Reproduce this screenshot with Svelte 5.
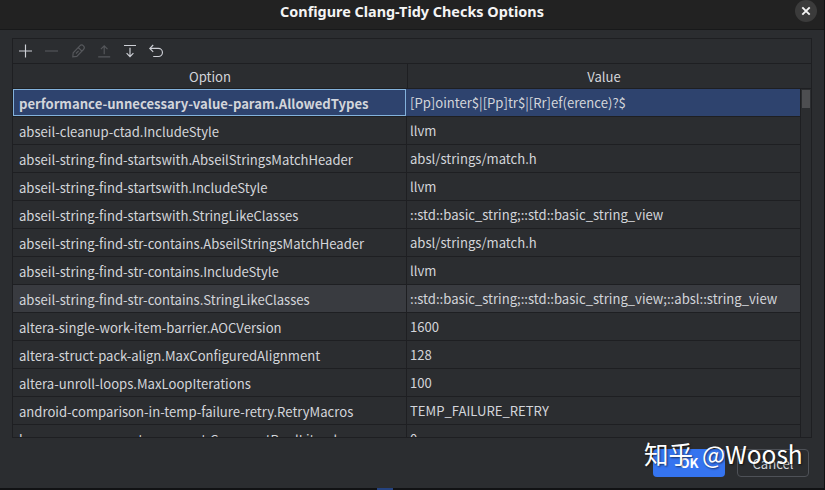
<script>
  const rows = [
    ['performance-unnecessary-value-param.AllowedTypes', '[Pp]ointer$|[Pp]tr$|[Rr]ef(erence)?$'],
    ['abseil-cleanup-ctad.IncludeStyle', 'llvm'],
    ['abseil-string-find-startswith.AbseilStringsMatchHeader', 'absl/strings/match.h'],
    ['abseil-string-find-startswith.IncludeStyle', 'llvm'],
    ['abseil-string-find-startswith.StringLikeClasses', '::std::basic_string;::std::basic_string_view'],
    ['abseil-string-find-str-contains.AbseilStringsMatchHeader', 'absl/strings/match.h'],
    ['abseil-string-find-str-contains.IncludeStyle', 'llvm'],
    ['abseil-string-find-str-contains.StringLikeClasses', '::std::basic_string;::std::basic_string_view;::absl::string_view'],
    ['altera-single-work-item-barrier.AOCVersion', '1600'],
    ['altera-struct-pack-align.MaxConfiguredAlignment', '128'],
    ['altera-unroll-loops.MaxLoopIterations', '100'],
    ['android-comparison-in-temp-failure-retry.RetryMacros', 'TEMP_FAILURE_RETRY'],
    ['bugprone-argument-comment.CommentBoolLiterals', '0']
  ];
  const selected = 0;
  const hovered = 7;
</script>

<div class="window">
  <header class="titlebar">
    <h1>Configure Clang-Tidy Checks Options</h1>
    <button class="close" aria-label="Close">
      <svg width="22" height="22" viewBox="0 0 22 22"><path d="M7.3 7.3l7.4 7.4M14.7 7.3l-7.4 7.4" stroke="#f4f4f4" stroke-width="1.9" /></svg>
    </button>
  </header>

  <main>
    <section class="panel">
      <div class="toolbar">
        <svg viewBox="0 0 16 16"><path d="M8.5 1.5v13M2 8h13" /></svg>
        <svg viewBox="0 0 16 16" class="off"><path d="M2 8h13" /></svg>
        <svg viewBox="0 0 16 16" class="off pencil"><path d="M2.8 13.8l.4-4 6.6-6.9a2.5 2.5 0 0 1 3.7 3.6L6.8 13.4zM8.4 4.6l3.4 3.4M6 10.5l2.6-2.7" /></svg>
        <svg viewBox="0 0 16 16" class="off"><path d="M2.2 13.8h12M8.2 11.2V3M4.9 6.2L8.2 2.9l3.3 3.3" /></svg>
        <svg viewBox="0 0 16 16"><path d="M2 2.5h12M8 4.8V13.5M4.6 10.2L8 13.6l3.4-3.4" /></svg>
        <svg viewBox="0 0 16 16"><path d="M5.2 2L1.8 5.4l3.4 3.4M1.8 5.4h8.6a4.05 4.05 0 0 1 0 8.1H5.2" /></svg>
      </div>
      <div class="heads">
        <div class="option">Option</div>
        <div class="value">Value</div>
      </div>
      <div class="body">
        <div class="rows">
          {#each rows as [option, value], i}
            <div class="row" class:selected={i === selected} class:hovered={i === hovered}>
              <div class="option"><span>{option}</span></div>
              <div class="value"><span>{value}</span></div>
            </div>
          {/each}
        </div>
        <div class="track"><div class="thumb"></div></div>
      </div>
    </section>
    <footer>
      <button class="btn ok">OK</button>
      <button class="btn cancel">Cancel</button>
    </footer>
  </main>
  <div class="below"><i></i></div>
  <div class="watermark">知乎 <span>@Woosh</span></div>
</div>

<style>
  :global(body) { background: #2b2d30; }
  .window {
    position: relative;
    box-sizing: border-box;
    width: 825px;
    height: 490px;
    overflow: hidden;
    display: flex;
    flex-direction: column;
    background: #2b2d30;
    border-right: 1px solid #101113;
    color: #d3d5da;
    font: 13.1px/27px "Noto Sans CJK SC", "Noto Sans", sans-serif;
  }
  button { padding: 0; border: 0; font: inherit; color: inherit; }
  .titlebar {
    flex: none;
    box-sizing: border-box;
    height: 30px;
    display: flex;
    align-items: flex-start;
    background: #222222;
    border-bottom: 1px solid #18191a;
  }
  h1 {
    margin: 0;
    padding-left: 29px;
    flex: 1;
    text-align: center;
    font: bold 14.4px/24px "Noto Sans", "Open Sans", sans-serif;
    color: #f4f4f4;
    white-space: nowrap;
  }
  .close {
    width: 22px;
    height: 22px;
    margin-right: 7px;
    border-radius: 50%;
    background: #3b3b3b;
  }
  .close svg { display: block; }
  main { flex: 1; min-height: 0; padding: 8px 12px 0; }
  .panel {
    box-sizing: border-box;
    width: 800px;
    height: 400px;
    display: flex;
    flex-direction: column;
    border: 1px solid #1e1f22;
  }
  .toolbar {
    flex: none;
    height: 24px;
    display: flex;
    align-items: center;
    gap: 10.2px;
    padding-left: 4px;
    border-bottom: 1px solid #1e1f22;
  }
  .toolbar svg { width: 16px; height: 16px; fill: none; stroke: #ced0d6; stroke-width: 1.15; overflow: visible; }
  .toolbar svg.off { stroke: #55575b; }
  .toolbar svg.pencil { margin-left: 0.6px; margin-right: -0.6px; }
  .heads { flex: none; display: flex; height: 24px; line-height: 25px; text-align: center; border-bottom: 1px solid #1e1f22; }
  .option { box-sizing: border-box; width: 394px; flex: none; border-right: 1px solid #1e1f22; }
  .heads .option { width: 395px; }
  .value { flex: 1; }
  .heads .value { padding-right: 11px; }
  .body { flex: 1; min-height: 0; display: flex; overflow: hidden; }
  .rows { width: 787px; }
  .row { display: flex; height: 27px; border-bottom: 1px solid #1e1f22; white-space: nowrap; }
  .row .option { width: 394px; padding-left: 6px; line-height: 30px; }
  .row .value { padding-left: 3px; line-height: 28px; }
  .row.hovered { background: #393b40; }
  .row.selected { background: #2e436e; }
  .row.selected .option {
    font-weight: bold;
    width: 393px;
    margin-right: 1px;
    padding-left: 5px;
    line-height: 28px;
    border: 1px solid #83b2dc;
  }
  .track { flex: 1; border-left: 1px solid #1e1f22; padding: 1px 1px 0; }
  .thumb { height: 18px; background: #4d4e51; }
  footer { display: flex; justify-content: flex-end; gap: 12px; padding: 11px 3px 0 0; }
  .btn { box-sizing: border-box; width: 72px; height: 28px; border-radius: 4px; line-height: 28px; }
  .ok { background: #3574f0; color: #fff; font-weight: bold; }
  .cancel { background: transparent; border: 1px solid #4e5157; }
  .below { flex: none; height: 2px; background: #111214; }
  .below i { display: block; width: 16px; height: 2px; margin-left: 377px; background: #24427f; }
  .watermark {
    position: absolute;
    left: 644px;
    top: 436px;
    font-size: 24.5px;
    line-height: 36px;
    color: #fff;
    white-space: nowrap;
    text-shadow: 1px 1px 2px rgba(0, 0, 0, 0.6);
  }
  .watermark span { margin-left: 3.5px; }
</style>
